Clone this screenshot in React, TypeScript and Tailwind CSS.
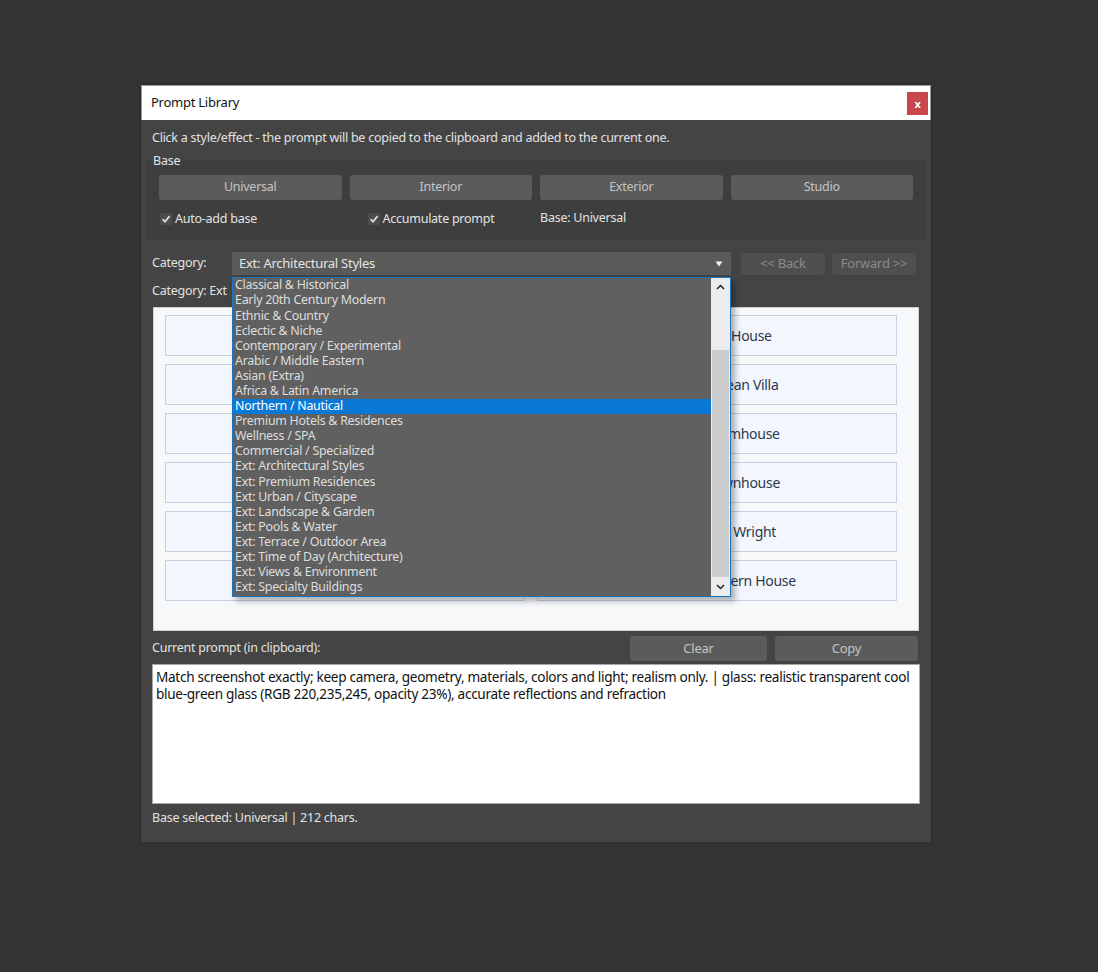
const categories = [
  "Classical & Historical",
  "Early 20th Century Modern",
  "Ethnic & Country",
  "Eclectic & Niche",
  "Contemporary / Experimental",
  "Arabic / Middle Eastern",
  "Asian (Extra)",
  "Africa & Latin America",
  "Northern / Nautical",
  "Premium Hotels & Residences",
  "Wellness / SPA",
  "Commercial / Specialized",
  "Ext: Architectural Styles",
  "Ext: Premium Residences",
  "Ext: Urban / Cityscape",
  "Ext: Landscape & Garden",
  "Ext: Pools & Water",
  "Ext: Terrace / Outdoor Area",
  "Ext: Time of Day (Architecture)",
  "Ext: Views & Environment",
  "Ext: Specialty Buildings",
];

const styles = [
  ["Modernist Villa", "Minimalist House"],
  ["Scandinavian House", "Mediterranean Villa"],
  ["Chalet", "Modern Farmhouse"],
  ["Brutalist Block", "Modern Townhouse"],
  ["Bauhaus Cube", "Frank Lloyd Wright"],
  ["Japanese House", "California Modern House"],
];

function Check() {
  return (
    <span className="flex h-[12px] w-[12px] items-center justify-center rounded-[1px] bg-[#4c4c4c]">
      <svg width="10" height="10" viewBox="0 0 10 10">
        <path d="M1.5 5.2 L4 7.6 L8.6 2.2" fill="none" stroke="#d8d8d8" strokeWidth="1.8" />
      </svg>
    </span>
  );
}

function GrayButton({ label, className = "" }: { label: string; className?: string }) {
  return (
    <div
      className={`flex h-[25px] items-center justify-center rounded-[3px] bg-[#5b5b5b] text-[12.5px] text-[#c4c4c4] ${className}`}
    >
      {label}
    </div>
  );
}

export default function App() {
  return (
    <div className="h-[972px] w-full overflow-hidden bg-[#343434] pt-[85px] pl-[141px] font-['Noto_Sans',sans-serif] tracking-[-0.25px]">
      <div className="w-[790px] bg-[#444444] shadow-[0_0_4px_rgba(0,0,0,0.3)]">
        {/* Title bar */}
        <div className="flex h-[35px] items-center justify-between border border-b-0 border-[#9a9a9a] bg-white pl-[9px] pr-[2px]">
          <span className="text-[13px] text-[#111]">Prompt Library</span>
          <div className="flex h-[23px] w-[21px] items-center justify-center bg-[#c9474b] text-[11px] font-bold leading-none text-white">
            x
          </div>
        </div>

        <div className="px-[11px] pb-[10px]">
          <div className="flex h-[34px] items-center pt-[2px] text-[12.5px] text-[#e2e2e2]">
            Click a style/effect - the prompt will be copied to the clipboard and added to the current one.
          </div>

          {/* Base group */}
          <fieldset className="-mx-[5px] h-[85px] rounded-[3px] border border-[#3a3a3a] bg-[#3e3e3e] px-[11px] pt-[7px]">
            <legend className="-ml-[6px] px-0 text-[12.5px] leading-[14px] text-[#e2e2e2]">Base</legend>
            <div className="grid grid-cols-4 gap-[8px]">
              <GrayButton label="Universal" />
              <GrayButton label="Interior" />
              <GrayButton label="Exterior" />
              <GrayButton label="Studio" />
            </div>
            <div className="mt-[10px] grid h-[17px] grid-cols-4 items-center gap-[8px] text-[12.5px] text-[#e2e2e2]">
              <div className="flex items-center gap-[3px] pl-[1px]">
                <Check />
                <span>Auto-add base</span>
              </div>
              <div className="flex items-center gap-[3px] pl-[18px]">
                <Check />
                <span>Accumulate prompt</span>
              </div>
              <div className="-mt-[3px]">Base: Universal</div>
            </div>
          </fieldset>

          {/* Category row */}
          <div className="mt-[13px] flex h-[23px] items-center text-[12.5px]">
            <span className="w-[80px] text-[#e2e2e2]">Category:</span>
            <div className="relative h-[23px] w-[499px]">
              <div className="flex h-full items-center justify-between bg-[#5a5a5a] pl-[7px] pr-[8px] text-[13px] text-[#e4e4e4]">
                <span>Ext: Architectural Styles</span>
                <svg width="8" height="6" viewBox="0 0 8 6">
                  <path d="M0.5 0.5 H7.5 L4 5.5 Z" fill="#f0f0f0" />
                </svg>
              </div>

              {/* Open dropdown list */}
              <div className="absolute left-0 top-[25px] z-10 flex h-[320px] w-[499px] border border-[#1a74c4] bg-[#606060] shadow-[4px_4px_6px_rgba(0,0,0,0.3)]">
                <div className="flex-1">
                  {categories.map((c) => (
                    <div
                      key={c}
                      className={`flex h-[15.1px] items-center pl-[2px] text-[12.4px] leading-none ${
                        c === "Northern / Nautical" ? "bg-[#0a78d6] text-white" : "text-[#dedede]"
                      }`}
                    >
                      {c}
                    </div>
                  ))}
                </div>
                <div className="flex w-[19px] flex-col bg-[#ececec]">
                  <div className="flex h-[18px] items-center justify-center">
                    <svg width="9" height="6" viewBox="0 0 9 6">
                      <path d="M1 5 L4.5 1.5 L8 5" fill="none" stroke="#222" strokeWidth="1.5" />
                    </svg>
                  </div>
                  <div className="flex-1 px-[1px] pt-[54px] pb-[1px]">
                    <div className="h-full bg-[#cdcdcd]" />
                  </div>
                  <div className="flex h-[18px] items-center justify-center">
                    <svg width="9" height="6" viewBox="0 0 9 6">
                      <path d="M1 1 L4.5 4.5 L8 1" fill="none" stroke="#222" strokeWidth="1.5" />
                    </svg>
                  </div>
                </div>
              </div>
            </div>
            <div className="ml-[10px] flex h-[22px] w-[84px] items-center justify-center rounded-[3px] bg-[#4f4f4f] text-[13px] text-[#8b8b8b]">
              {"<< Back"}
            </div>
            <div className="ml-[7px] flex h-[22px] w-[84px] items-center justify-center rounded-[3px] bg-[#4f4f4f] text-[13px] text-[#8b8b8b]">
              {"Forward >>"}
            </div>
          </div>

          <div className="flex h-[30px] items-center pt-[3px] text-[12.5px] text-[#e2e2e2]">Category: Ext</div>

          {/* Styles panel */}
          <div className="ml-[1px] mt-[2px] h-[324px] w-[766px] border border-[#cfcfcf] bg-[#f7f8fa] pl-[11px] pr-[21px] pt-[7px]">
            <div className="grid grid-cols-2 gap-x-[12px] gap-y-[8px]">
              {styles.flat().map((s) => (
                <div
                  key={s}
                  className="flex h-[41px] items-center justify-center border border-[#c6d1e2] bg-[#f3f6fc] text-[14px] tracking-[-0.3px] text-[#2b3a4e]"
                >
                  {s}
                </div>
              ))}
            </div>
          </div>

          {/* Current prompt */}
          <div className="mt-[6px] flex h-[23px] items-center text-[12.5px]">
            <span className="flex-1 text-[#e2e2e2]">Current prompt (in clipboard):</span>
            <GrayButton label="Clear" className="h-[23px] w-[137px] text-[13px]" />
            <GrayButton label="Copy" className="ml-[8px] mr-[2px] h-[23px] w-[143px] text-[13px]" />
          </div>
          <div className="mt-[4px] h-[140px] w-[768px] overflow-hidden whitespace-nowrap border border-[#a8a8a8] bg-white px-[3px] pt-[3px] text-[13.6px] leading-[17px] tracking-[-0.3px] text-[#111]">
            Match screenshot exactly; keep camera, geometry, materials, colors and light; realism only. | glass: realistic transparent cool
            <br />
            blue-green glass (RGB 220,235,245, opacity 23%), accurate reflections and refraction
          </div>
          <div className="flex h-[28px] items-center pt-[1px] text-[12.5px] text-[#e2e2e2]">
            Base selected: Universal | 212 chars.
          </div>
        </div>
      </div>
    </div>
  );
}
